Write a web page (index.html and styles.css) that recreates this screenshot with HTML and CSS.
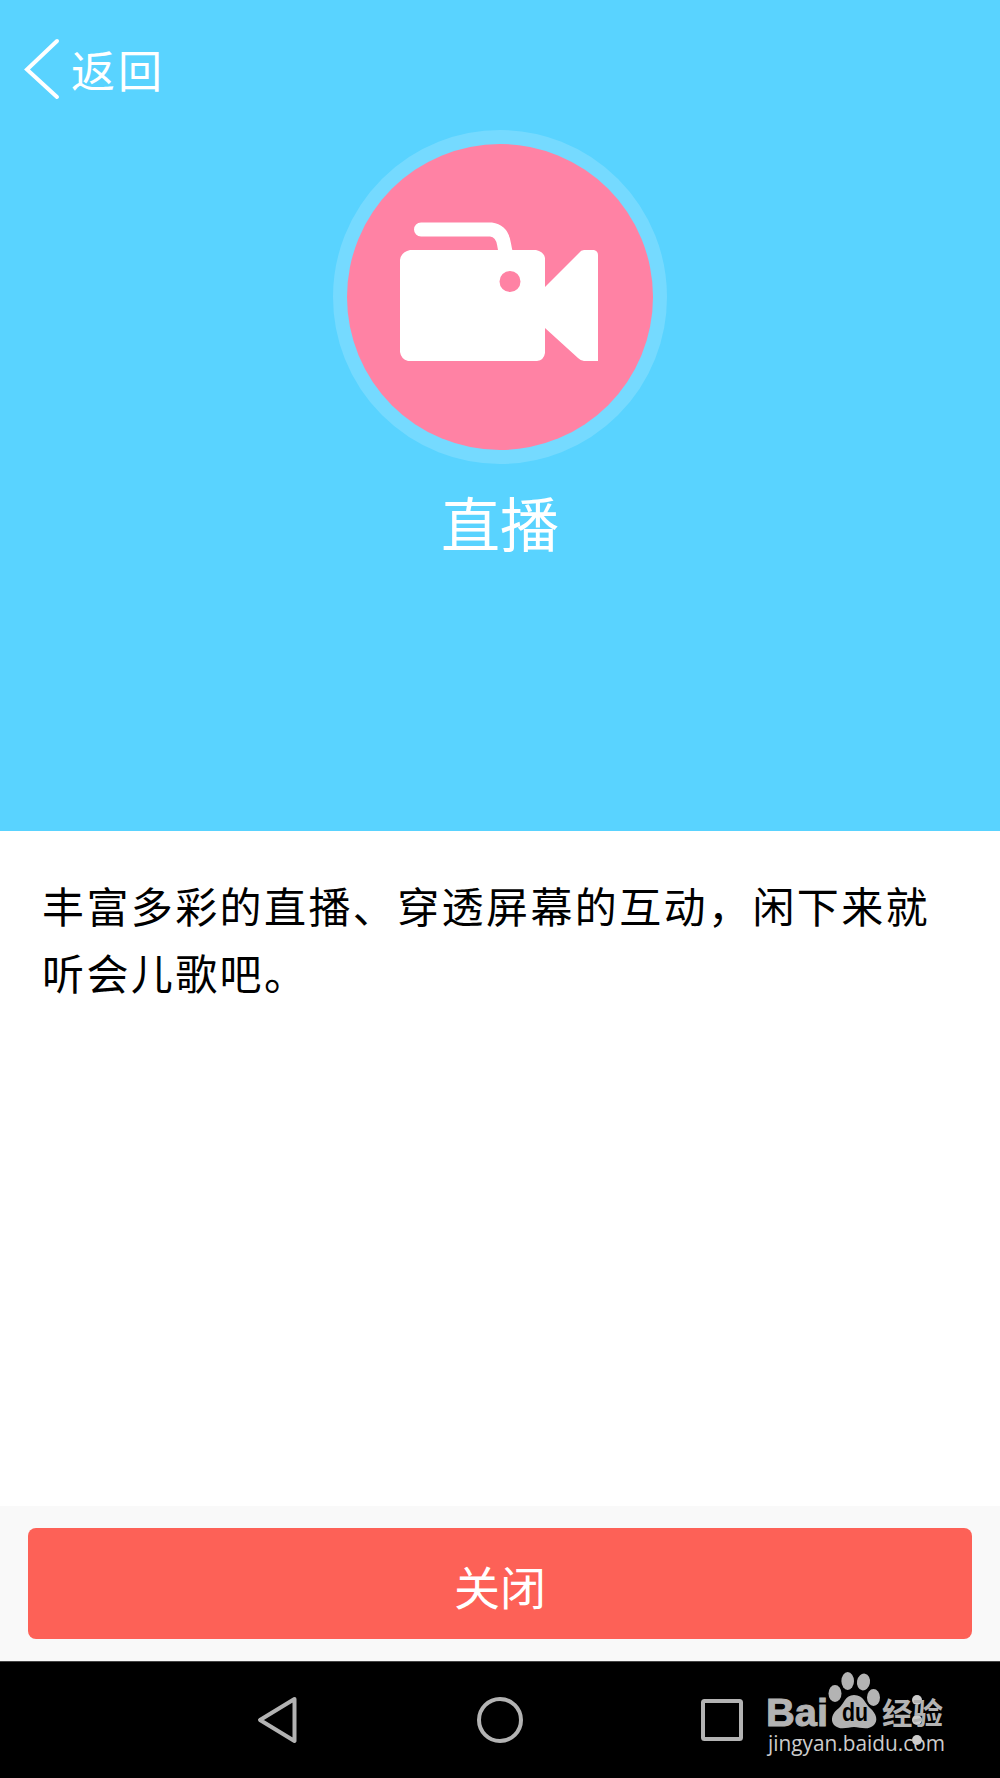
FILE: index.html
```html
<!DOCTYPE html>
<html lang="zh-CN">
<head>
    <meta charset="UTF-8">
    <meta name="viewport" content="width=device-width, initial-scale=1.0">
    <title>直播</title>
    <link rel="stylesheet" href="styles.css">
</head>
<body>
    <header class="hero">
        <a class="back">
            <svg class="back-icon" width="36" height="62" viewBox="0 0 36 62">
                <path d="M33 3L3 31.500L33 59" />
            </svg>
            <span>返回</span>
        </a>
        <div class="avatar">
            <svg width="306" height="306" viewBox="0 0 306 306">
                <!-- handle -->
                <path class="handle" d="M74 85.500H144Q155 87 157 100Q158 107 160 112" />
                <!-- body and lens -->
                <path class="camera" fill-rule="evenodd" d="M63 106H189Q197 108 198 114V143L232 109Q234 106 237 106H247Q251 107 251 111V217H237Q234 217 231 214L198 184V209Q197 216 190 217H61Q54 215 53 208V116Q54 108 63 106Z M163 127A10.500 10.500 0 1 0 163 148A10.500 10.500 0 1 0 163 127Z" />
            </svg>
        </div>
        <h1 class="title">直播</h1>
    </header>

    <main class="content">
        <p class="description">丰富多彩的直播、穿透屏幕的互动，闲下来就听会儿歌吧。</p>
    </main>

    <footer class="actions">
        <button class="close-button">关闭</button>
    </footer>

    <nav class="navbar">
        <svg class="nav-back" width="42" height="48" viewBox="0 0 42 48">
            <path d="M38.500 3L4 24L38.500 45Z" />
        </svg>
        <svg class="nav-home" width="48" height="48" viewBox="0 0 48 48">
            <circle cx="24" cy="24" r="21" />
        </svg>
        <svg class="nav-recent" width="44" height="44" viewBox="0 0 44 44">
            <rect x="3" y="3" width="38" height="38" rx="1.500" />
        </svg>
        <svg class="nav-more" width="10" height="52" viewBox="0 0 10 52">
            <circle cx="5" cy="6" r="5" />
            <circle cx="5" cy="26" r="5" />
            <circle cx="5" cy="46" r="5" />
        </svg>
        <!-- watermark over the bar -->
        <svg class="watermark" width="190" height="100" viewBox="0 0 190 100">
            <g class="brand">
                <text class="brand-name" x="3" y="63.500" textLength="62" lengthAdjust="spacingAndGlyphs">Bai</text>
                <ellipse cx="72" cy="31.500" rx="6.500" ry="8.500" />
                <ellipse cx="84.700" cy="19" rx="6.300" ry="9" />
                <ellipse cx="100.500" cy="20" rx="6.500" ry="8.500" transform="rotate(10 100.500 20)" />
                <ellipse cx="110.500" cy="35.500" rx="6.500" ry="8.500" />
                <path d="M91 33C101 33 102 42 107 46C114 52 115 59 111 63C105 69 97 65 91 65C85 65 77 69 71 63C67 58 69 51 76 46C81 42 82 33 91 33Z" />
                <text class="brand-du" x="79" y="59" textLength="26" lengthAdjust="spacingAndGlyphs">du</text>
                <text class="brand-cn" x="119" y="62" textLength="61" lengthAdjust="spacingAndGlyphs">经验</text>
            </g>
            <text class="site" x="5" y="89" textLength="177" lengthAdjust="spacingAndGlyphs">jingyan.baidu.com</text>
        </svg>
    </nav>
</body>
</html>
```
FILE: styles.css
```css
* {
    box-sizing: border-box;
}

body {
    display: flex;
    flex-direction: column;
    height: 1778px;
    margin: 0;
    background: #fff;
    font-family: KaiTi, STKaiti, "Noto Sans CJK SC", sans-serif;
}

.hero {
    display: flex;
    flex-direction: column;
    align-items: center;
    height: 830.500px;
    background: #59d3ff;
    color: #fff;
}

.back {
    display: flex;
    align-items: center;
    align-self: flex-start;
    gap: 11px;
    height: 62px;
    margin: 38px 0 0 24px;
    font-size: 44px;
    line-height: 62px;
    letter-spacing: 3px;
}

.back-icon path {
    fill: none;
    stroke: #fff;
    stroke-width: 4;
    stroke-linecap: round;
}

.avatar {
    width: 334px;
    height: 334px;
    margin-top: 30px;
    border: 14px solid #75daff;
    border-radius: 50%;
    background: #75daff;
}

.avatar svg {
    display: block;
    border-radius: 50%;
    background: #ff82a4;
}

.camera {
    fill: #fff;
}

.handle {
    fill: none;
    stroke: #fff;
    stroke-width: 14;
    stroke-linecap: round;
}

.title {
    margin: 18px 0 0;
    font-size: 59px;
    font-weight: normal;
    line-height: 80px;
}

.content {
    flex: 1;
    padding: 40px 41px 0 42px;
}

.description {
    margin: 0;
    color: #000;
    font-size: 42px;
    line-height: 67.500px;
    letter-spacing: 2.400px;
}

.actions {
    height: 155px;
    padding: 22px 28px;
    background: #f9f9f9;
}

.close-button {
    display: block;
    width: 100%;
    height: 111px;
    padding: 2px 0 0;
    border: none;
    border-radius: 8px;
    background: #fd6157;
    color: #fff;
    font-family: inherit;
    font-size: 46px;
}

.navbar {
    position: relative;
    display: flex;
    align-items: center;
    height: 117px;
    border-top: 1px solid #444;
    background: #000;
}

.navbar svg {
    flex: none;
}

.nav-back,
.nav-home,
.nav-recent {
    fill: none;
    stroke: #b3b3b3;
    stroke-width: 4;
    stroke-linejoin: round;
}

.nav-back {
    margin-left: 256px;
}

.nav-home {
    margin-left: 178px;
}

.nav-recent {
    margin-left: 176px;
}

.nav-more {
    margin-left: 168px;
    fill: #ccc;
}

.watermark {
    position: absolute;
    top: 0;
    left: 763px;
    overflow: visible;
}

.brand {
    fill: #b3b3b3;
}

.brand-name {
    font: bold 38px "Liberation Sans", sans-serif;
    stroke: #b3b3b3;
}

.brand-du {
    fill: #000;
    font: bold 25px "Liberation Sans", sans-serif;
}

.brand-cn {
    font: bold 30px "Noto Sans CJK SC", sans-serif;
}

.site {
    fill: #ccc;
    font: 22px "Open Sans", sans-serif;
}
```
